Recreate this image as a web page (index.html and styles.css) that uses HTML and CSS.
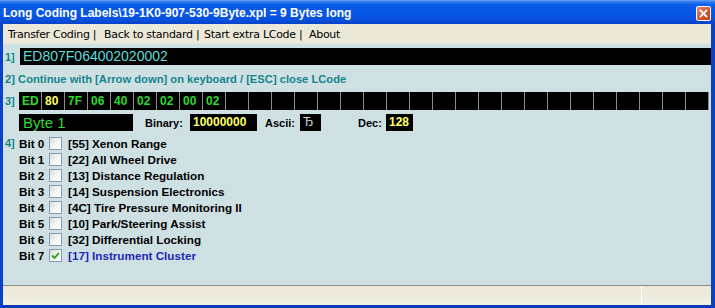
FILE: index.html
```html
<!DOCTYPE html>
<html>
<head>
<meta charset="utf-8">
<link rel="stylesheet" href="styles.css">
</head>
<body>
<div class="window">
  <div class="titlebar">
    <span class="title">Long Coding Labels\19-1K0-907-530-9Byte.xpl = 9 Bytes long</span>
    <span class="close"><svg width="13" height="13" viewBox="0 0 13 13"><path d="M3.5 3.5 L9.5 9.5 M9.5 3.5 L3.5 9.5" stroke="#fff" stroke-width="1.8" stroke-linecap="square"/></svg></span>
  </div>
  <div class="menubar">
    <span class="mi m1">Transfer Coding |</span>
    <span class="mi m2">Back to standard |</span>
    <span class="mi m3">Start extra LCode |</span>
    <span class="mi m4">About</span>
  </div>
  <div class="content">
    <div class="row r1">
      <span class="num">1]</span>
      <div class="codebox">ED807F064002020002</div>
    </div>
    <div class="row r2"><span class="num">2] Continue with [Arrow down] on keyboard / [ESC] close LCode</span></div>
    <div class="row r3">
      <span class="num">3]</span>
      <div class="bytes" id="bytes">
        <span class="cell">ED</span><span class="cell sel">80</span><span class="cell">7F</span><span class="cell">06</span><span class="cell">40</span><span class="cell">02</span><span class="cell">02</span><span class="cell">00</span><span class="cell">02</span><span class="cell"></span><span class="cell"></span><span class="cell"></span><span class="cell"></span><span class="cell"></span><span class="cell"></span><span class="cell"></span><span class="cell"></span><span class="cell"></span><span class="cell"></span><span class="cell"></span><span class="cell"></span><span class="cell"></span><span class="cell"></span><span class="cell"></span><span class="cell"></span><span class="cell"></span><span class="cell"></span><span class="cell"></span><span class="cell"></span><span class="cell"></span>
      </div>
    </div>
    <div class="row r4">
      <div class="bytename">Byte 1</div>
      <span class="lbl lbin">Binary:</span><div class="val vbin">10000000</div>
      <span class="lbl lasc">Ascii:</span><div class="val vasc">Ђ</div>
      <span class="lbl ldec">Dec:</span><div class="val vdec">128</div>
    </div>
    <div class="bits">
      <div class="bit"><span class="num n4">4]</span><span class="bl">Bit 0</span><span class="cb"></span><span class="bt">[55] Xenon Range</span></div>
      <div class="bit"><span class="num n4"></span><span class="bl">Bit 1</span><span class="cb"></span><span class="bt">[22] All Wheel Drive</span></div>
      <div class="bit"><span class="num n4"></span><span class="bl">Bit 2</span><span class="cb"></span><span class="bt">[13] Distance Regulation</span></div>
      <div class="bit"><span class="num n4"></span><span class="bl">Bit 3</span><span class="cb"></span><span class="bt">[14] Suspension Electronics</span></div>
      <div class="bit"><span class="num n4"></span><span class="bl">Bit 4</span><span class="cb"></span><span class="bt">[4C] Tire Pressure Monitoring II</span></div>
      <div class="bit"><span class="num n4"></span><span class="bl">Bit 5</span><span class="cb"></span><span class="bt">[10] Park/Steering Assist</span></div>
      <div class="bit"><span class="num n4"></span><span class="bl">Bit 6</span><span class="cb"></span><span class="bt">[32] Differential Locking</span></div>
      <div class="bit on"><span class="num n4"></span><span class="bl">Bit 7</span><span class="cb"><svg width="11" height="11" viewBox="0 0 11 11"><path d="M2 5.5 L4.5 8 L9 3" fill="none" stroke="#21a121" stroke-width="1.8"/></svg></span><span class="bt">[17] Instrument Cluster</span></div>
    </div>
  </div>
  <div class="statusbar">
    <div class="sb1"></div>
    <div class="sb2"></div>
  </div>
</div>
</body>
</html>
```
FILE: styles.css
```css
html, body {
  margin: 0;
  padding: 0;
  width: 715px;
  height: 308px;
  overflow: hidden;
  background: #0a3fd0;
}
.window {
  width: 715px;
  height: 308px;
  box-sizing: border-box;
  border-left: 3px solid #0842c8;
  border-right: 4px solid #0842c8;
  border-bottom: 3px solid #0a3ab8;
  display: flex;
  flex-direction: column;
  background: #cfe0e3;
}
.titlebar {
  height: 24px;
  margin-left: -3px;
  margin-right: -4px;
  background: linear-gradient(to bottom, #6aa4f8 0px, #2a78f0 2px, #0a5ce8 5px, #0656e6 14px, #0a50dc 20px, #0841c8 24px);
  display: flex;
  align-items: center;
  justify-content: space-between;
  padding: 0 4px 0 3px;
  box-sizing: border-box;
}
.title {
  font-family: "Liberation Sans", Arial, sans-serif;
  font-weight: bold;
  font-size: 12px;
  color: #fff;
  white-space: nowrap;
  margin-top: 2px;
}
.close {
  width: 13px;
  height: 13px;
  border: 1px solid #fff;
  border-radius: 2px;
  background: linear-gradient(135deg, #e8896a, #d2512c 60%, #c0401c);
  display: flex;
  margin-top: 2px;
}
.menubar {
  height: 20px;
  background: #ece9d8;
  display: flex;
  align-items: center;
  font-family: "DejaVu Sans", sans-serif;
  font-size: 11px;
  letter-spacing: -0.3px;
  color: #000;
  white-space: nowrap;
}
.mi { display: block; }
.m1 { margin-left: 5px; width: 96px; }
.m2 { width: 100px; }
.m3 { width: 105px; }
.content {
  flex: 1;
  padding: 4px 0 0 2px;
  font-family: "Liberation Sans", Arial, sans-serif;
  font-weight: bold;
  font-size: 11px;
}
.row { display: flex; align-items: center; }
.num { color: #14858a; width: 15px; flex: none; }
.r1 { height: 17px; }
.codebox {
  flex: 1;
  height: 17px;
  background: #000;
  color: #5adcdc;
  font-family: "Liberation Sans", Arial, sans-serif;
  font-weight: normal;
  font-size: 14px;
  line-height: 17px;
  padding-left: 3px;
}
.r2 { height: 27px; font-size: 11.2px; }
.r2 .num { width: auto; }
.r3 { height: 18px; }
.r3 .num { width: 14px; }
.bytes { display: flex; background: #000; height: 18px; }
.cell {
  height: 18px;
  border-right: 1px solid #8a8a8a;
  color: #2ed82e;
  font-size: 12px;
  line-height: 18px;
  padding-left: 3px;
  box-sizing: content-box;
  width: 19px;
}
.cell.sel { color: #ffff60; }
.r4 { height: 17px; margin-top: 4px; padding-left: 14px; }
.bytename {
  width: 110px;
  height: 17px;
  background: #000;
  color: #2ed82e;
  font-weight: normal;
  font-size: 15px;
  line-height: 17px;
  padding-left: 4px;
}
.lbl { color: #000; }
.lbin { margin-left: 12px; width: 45px; }
.lasc { margin-left: 8px; width: 35px; }
.ldec { margin-left: 37px; width: 28px; }
.val {
  height: 17px;
  background: #000;
  color: #ffff60;
  font-size: 12px;
  line-height: 17px;
  padding-left: 3px;
  box-sizing: border-box;
}
.vbin { width: 67px; }
.vasc { width: 21px; color: #d8d8d8; font-weight: normal; }
.vdec { width: 27px; }
.bits { margin-top: 4px; font-size: 11.7px; }
.bit { display: flex; align-items: center; height: 16px; color: #000; }
.n4 { width: 14px; font-size: 11px; }
.bl { width: 30px; }
.cb {
  width: 11px;
  height: 11px;
  border: 1px solid #7f9db9;
  background: linear-gradient(135deg, #dcdcd4, #f4f4f0 50%, #fff);
  display: flex;
  margin-right: 6px;
}
.on .bt { color: #1c28b4; }
.statusbar {
  height: 19px;
  border-top: 1px solid #8e8c80;
  background: linear-gradient(to bottom, #ece9d8, #f2efe4);
  display: flex;
}
.sb1 { width: 638px; border-right: 1px solid #fff; }
.sb2 { flex: 1; }
```
